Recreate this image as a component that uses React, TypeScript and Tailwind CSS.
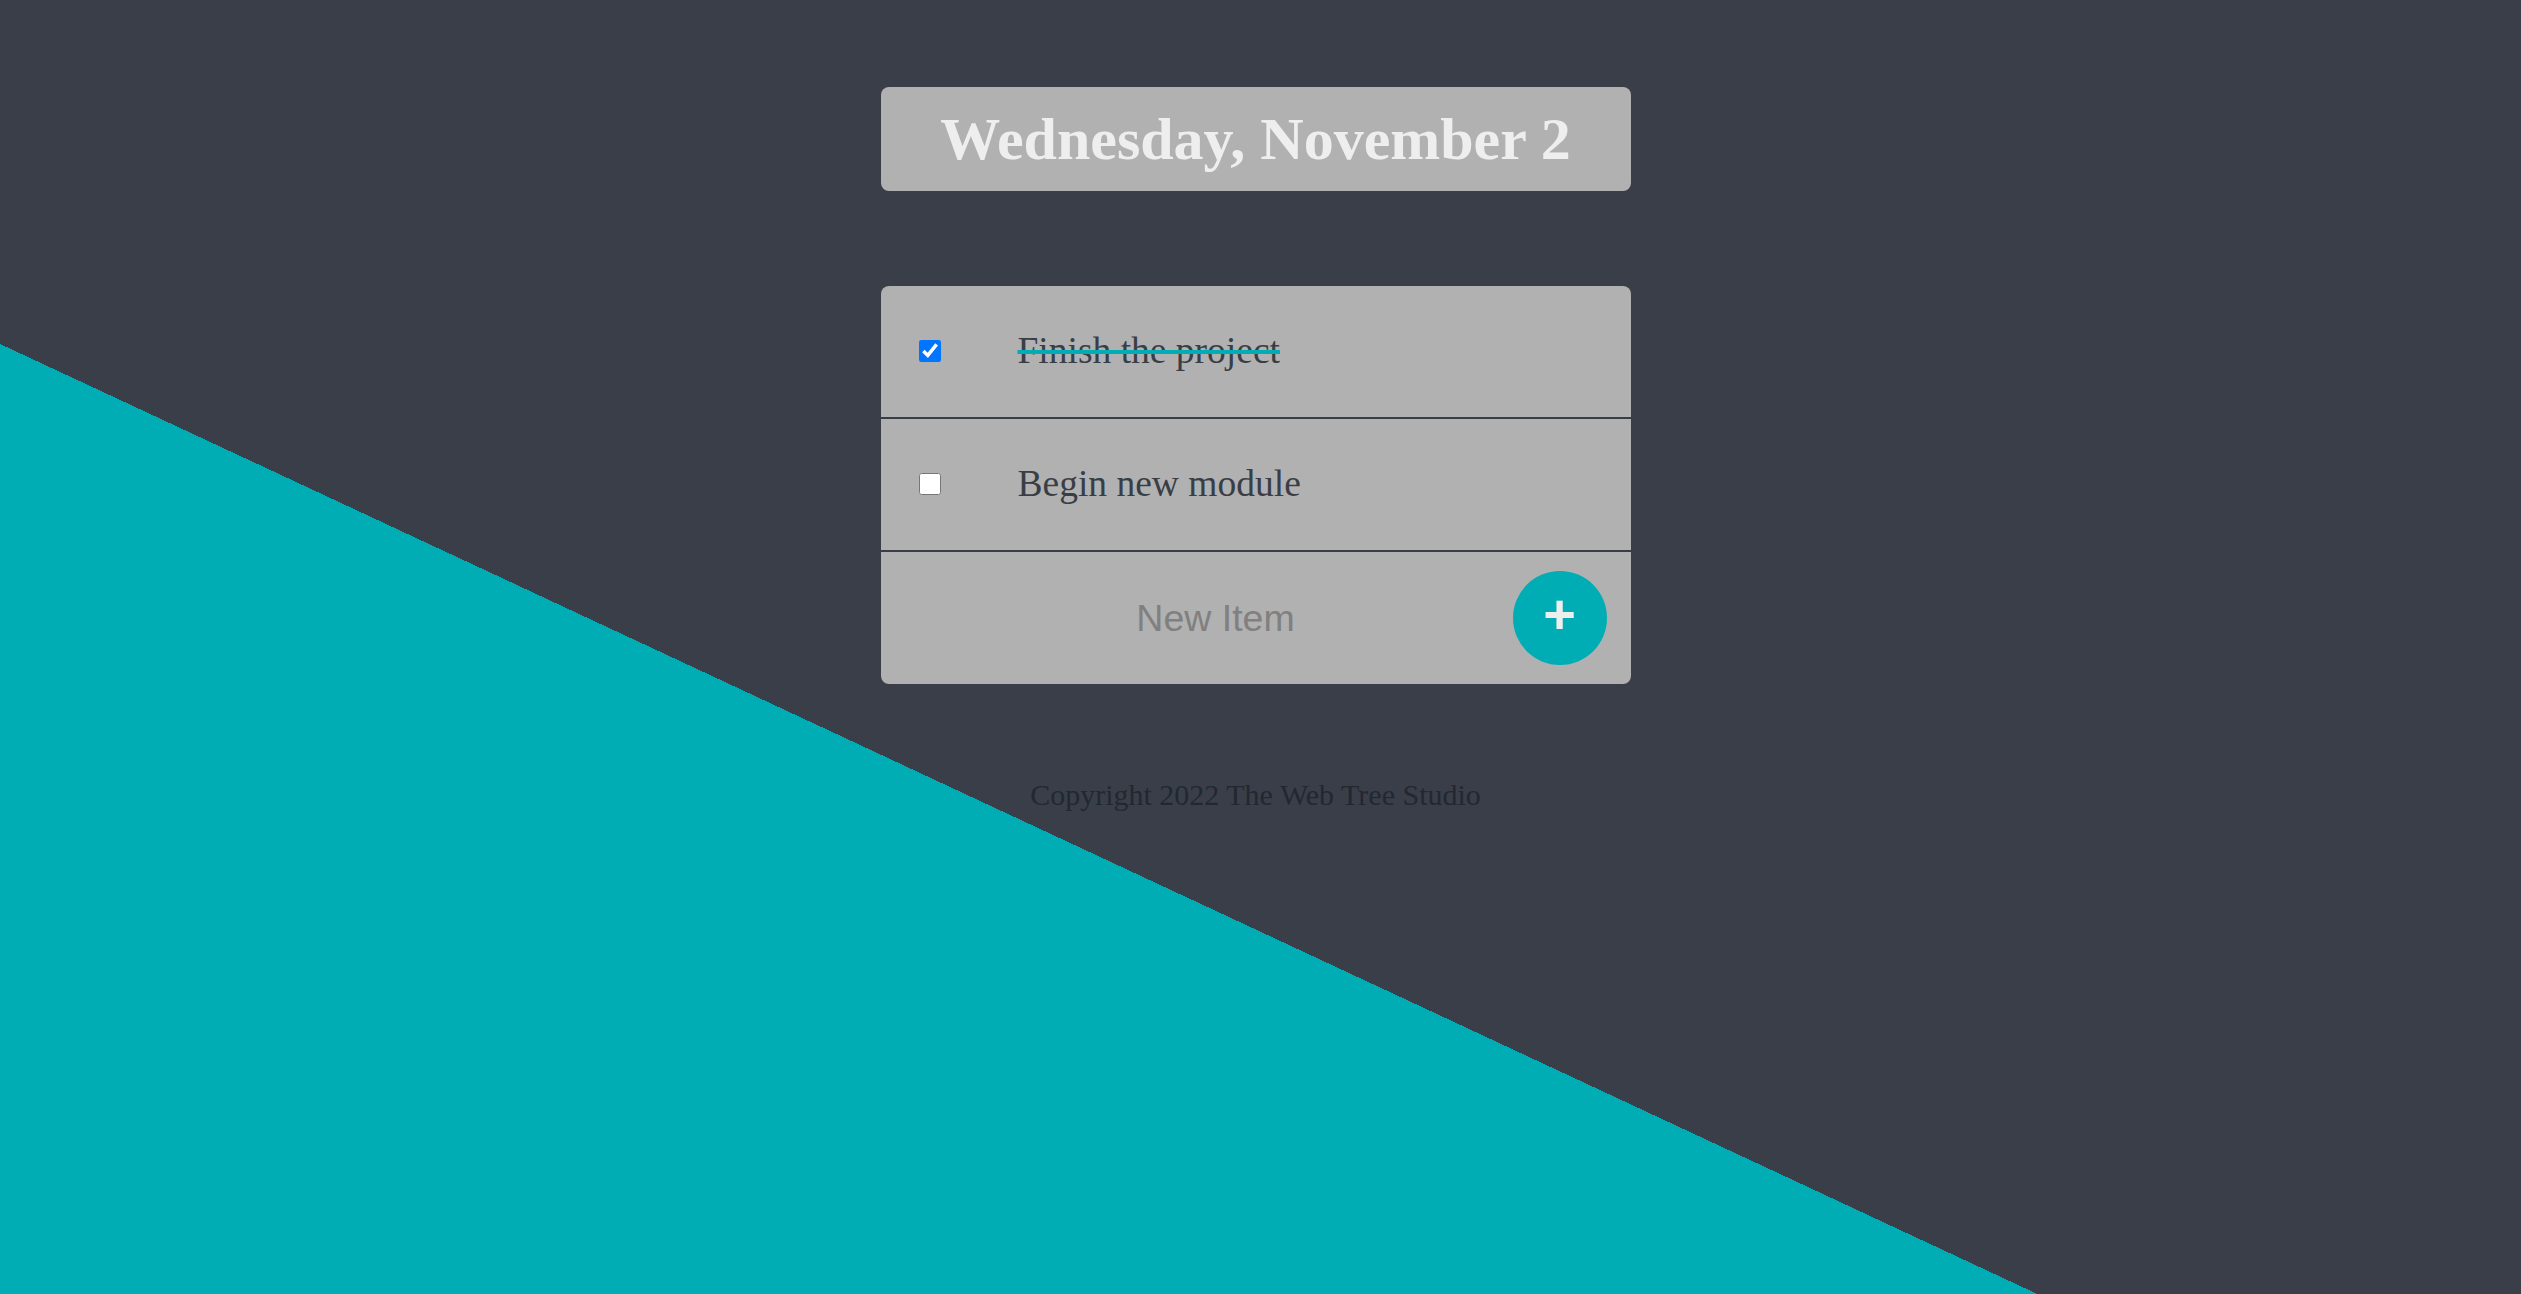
import { useState } from 'react'

type Item = {
  id: number
  label: string
  done: boolean
}

const initialItems: Item[] = [
  { id: 1, label: 'Finish the project', done: true },
  { id: 2, label: 'Begin new module', done: false },
]

export default function App() {
  const [items, setItems] = useState(initialItems)
  const [draft, setDraft] = useState('')

  function toggle(id: number) {
    setItems((prev) => prev.map((it) => (it.id === id ? { ...it, done: !it.done } : it)))
  }

  return (
    <div className="min-h-screen w-full bg-[linear-gradient(25deg,#00adb5_38.47%,#3a3e48_38.47%)] pr-[10px] pt-[87px] font-['Liberation_Serif',serif]">
      <div className="mx-auto flex h-[104px] w-[750px] items-center justify-center rounded-[8px] bg-[#b1b1b1]">
        <h1 className="text-[60px] font-bold leading-none text-[#eeeeee]">Wednesday, November 2</h1>
      </div>

      <div className="mx-auto mt-[95px] w-[750px] rounded-[8px] bg-[#b1b1b1]">
        {items.map((it) => (
          <div key={it.id} className="flex h-[133px] items-center border-b-2 border-[#393e46] pb-[2px]">
            <input
              type="checkbox"
              checked={it.done}
              onChange={() => toggle(it.id)}
              className="ml-[38px] h-[22px] w-[22px]"
            />
            <p
              className={
                it.done
                  ? 'ml-[77px] text-[37.5px] leading-none text-[#393e46] line-through decoration-[#00adb5] decoration-[4px]'
                  : 'ml-[77px] text-[37.5px] leading-none text-[#393e46]'
              }
            >
              {it.label}
            </p>
          </div>
        ))}
        <form
          className="flex h-[132px] items-center"
          onSubmit={(e) => {
            e.preventDefault()
          }}
        >
          <input
            type="text"
            value={draft}
            onChange={(e) => setDraft(e.target.value)}
            placeholder="New Item"
            className="ml-[82px] h-[100px] w-[506px] bg-transparent text-center font-['Liberation_Sans',sans-serif] text-[37.5px] text-[#393e46] outline-none placeholder:text-[#808080]"
          />
          <button
            type="submit"
            className="ml-[44px] flex h-[94px] w-[94px] items-center justify-center rounded-full bg-[#00adb5] pb-[9px] font-['Liberation_Sans',sans-serif] text-[56px] font-bold leading-none text-[#eeeeee]"
          >
            +
          </button>
        </form>
      </div>

      <footer className="mt-[94px] text-center text-[30px] leading-[34px] text-[#222831]">
        Copyright 2022 The Web Tree Studio
      </footer>
    </div>
  )
}
